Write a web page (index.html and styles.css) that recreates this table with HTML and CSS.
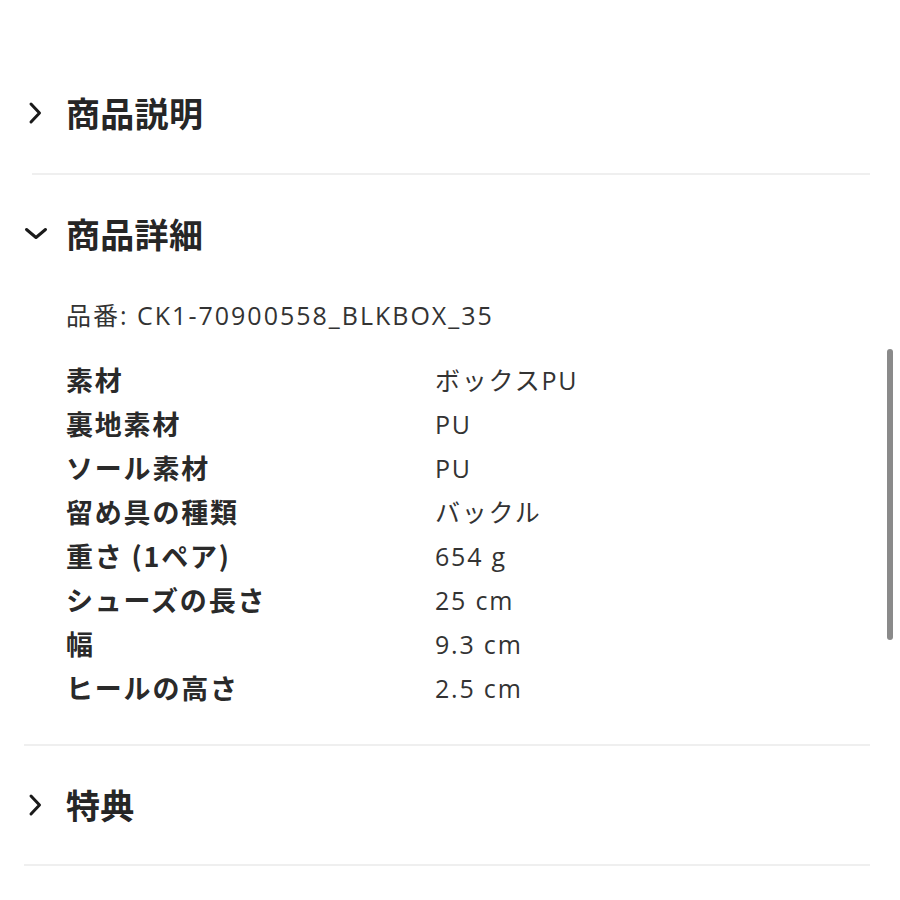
FILE: index.html
```html
<!DOCTYPE html>
<html lang="ja">
<head>
<meta charset="utf-8">
<link rel="stylesheet" href="styles.css">
</head>
<body>
<div class="page">
  <div class="acc-head first">
    <svg class="chev" width="24" height="24" viewBox="0 0 24 24"><path d="M7 3 L15.5 12 L7 21" fill="none" stroke="#1a1a1a" stroke-width="3" stroke-linecap="round" stroke-linejoin="round"/></svg>
    <span class="acc-title">商品説明</span>
  </div>
  <div class="divider d1"></div>

  <div class="acc-head open">
    <svg class="chev down" width="24" height="24" viewBox="0 0 24 24"><path d="M2.5 7.5 L12 15.5 L21.5 7.5" fill="none" stroke="#1a1a1a" stroke-width="3" stroke-linecap="round" stroke-linejoin="round"/></svg>
    <span class="acc-title">商品詳細</span>
  </div>
  <div class="acc-body">
    <div class="sku">品番: CK1-70900558_BLKBOX_35</div>
    <div class="spec">
      <div class="k">素材</div><div class="v">ボックスPU</div>
      <div class="k">裏地素材</div><div class="v">PU</div>
      <div class="k">ソール素材</div><div class="v">PU</div>
      <div class="k">留め具の種類</div><div class="v">バックル</div>
      <div class="k">重さ (1ペア)</div><div class="v">654 g</div>
      <div class="k">シューズの長さ</div><div class="v">25 cm</div>
      <div class="k">幅</div><div class="v">9.3 cm</div>
      <div class="k">ヒールの高さ</div><div class="v">2.5 cm</div>
    </div>
  </div>
  <div class="divider"></div>

  <div class="acc-head">
    <svg class="chev" width="24" height="24" viewBox="0 0 24 24"><path d="M7 3 L15.5 12 L7 21" fill="none" stroke="#1a1a1a" stroke-width="3" stroke-linecap="round" stroke-linejoin="round"/></svg>
    <span class="acc-title">特典</span>
  </div>
  <div class="divider"></div>
</div>
<div class="scrollbar"></div>
</body>
</html>
```
FILE: styles.css
```css
html, body {
  margin: 0;
  padding: 0;
  background: #ffffff;
}
body {
  font-family: "Noto Sans CJK JP", "Noto Sans", sans-serif;
  color: #2a2a2a;
  width: 900px;
  height: 900px;
  overflow: hidden;
  position: relative;
}
.page {
  padding-top: 53px;
  display: flex;
  flex-direction: column;
}
.acc-head {
  height: 118px;
  display: flex;
  align-items: center;
  padding-left: 24px;
}
.acc-head.first {
  height: 120px;
}
.chev {
  width: 24px;
  height: 24px;
  margin-right: 18px;
  flex: none;
}
.acc-title {
  font-size: 34px;
  font-weight: 700;
  color: #262626;
  letter-spacing: 0.3px;
  line-height: 1;
}
.divider {
  height: 2px;
  background: #efefef;
  margin: 0 30px 0 24px;
}
.divider.d1 {
  margin-left: 32px;
}
.acc-body {
  padding: 0 0 34px 66px;
}
.sku {
  height: 44px;
  line-height: 44px;
  font-family: "Open Sans", "Noto Sans CJK JP", sans-serif;
  font-size: 25px;
  letter-spacing: 2px;
  color: #333;
  margin-bottom: 21px;
}
.spec {
  display: grid;
  grid-template-columns: 369px 1fr;
  grid-auto-rows: 44px;
  align-items: center;
}
.spec .k {
  font-size: 27px;
  font-weight: 700;
  letter-spacing: 1.8px;
  color: #2a2a2a;
  line-height: 44px;
}
.spec .v {
  font-family: "Open Sans", "Noto Sans CJK JP", sans-serif;
  font-size: 25px;
  letter-spacing: 1.8px;
  color: #333;
  line-height: 44px;
}
.scrollbar {
  position: absolute;
  left: 887px;
  top: 349px;
  width: 6px;
  height: 291px;
  border-radius: 3px;
  background: #8a8a8a;
}
```
